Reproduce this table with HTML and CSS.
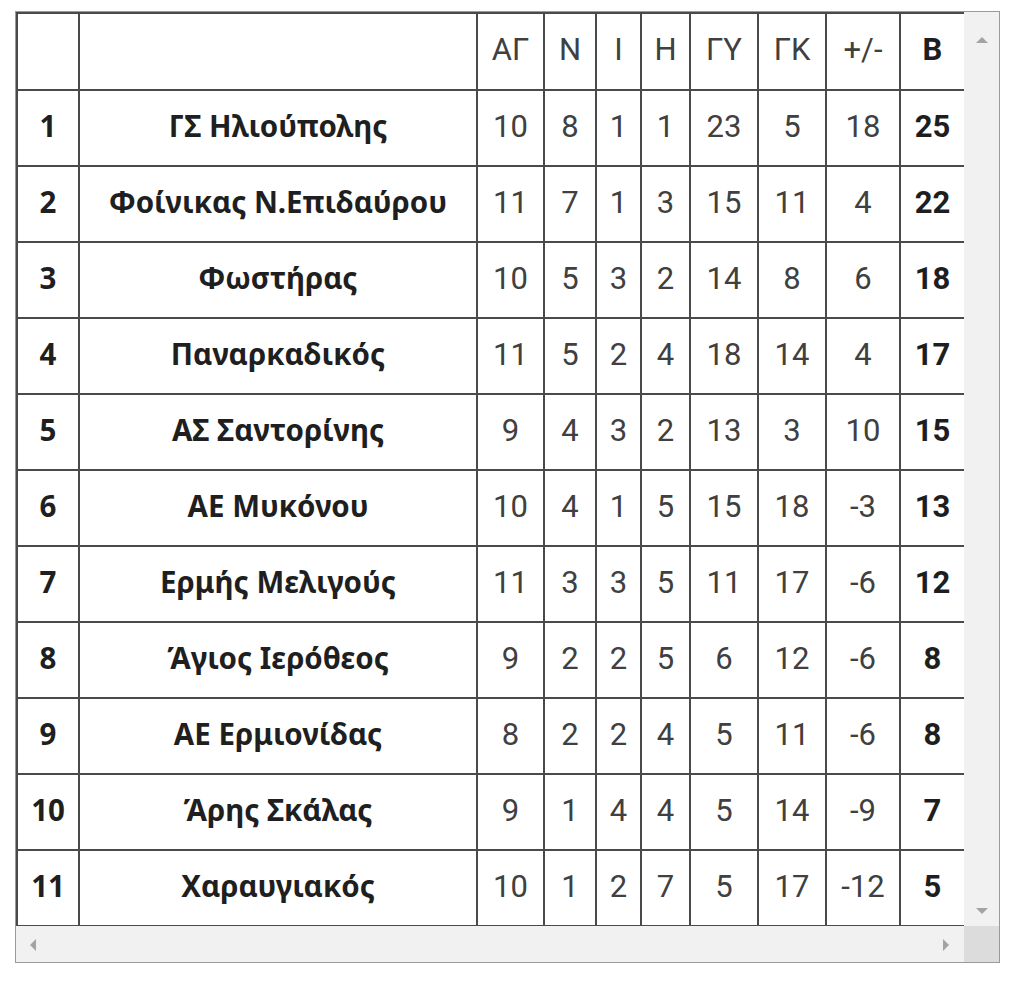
FILE: index.html
```html
<!DOCTYPE html>
<html lang="el">
<head>
<meta charset="utf-8">
<title>Βαθμολογία</title>
<link rel="stylesheet" href="styles.css">
</head>
<body>
<div class="frame">
  <div class="viewport">
    <table class="standings">
      <colgroup>
        <col class="c-pos"><col class="c-team"><col class="c-ag"><col class="c-n"><col class="c-i"><col class="c-h"><col class="c-gy"><col class="c-gk"><col class="c-diff"><col class="c-pts">
      </colgroup>
      <thead>
        <tr><th></th><th></th><th>ΑΓ</th><th>Ν</th><th>Ι</th><th>Η</th><th>ΓΥ</th><th>ΓΚ</th><th>+/-</th><th class="b">Β</th></tr>
      </thead>
      <tbody>
        <tr><td class="pos">1</td><td class="team">ΓΣ Ηλιούπολης</td><td>10</td><td>8</td><td>1</td><td>1</td><td>23</td><td>5</td><td>18</td><td class="b">25</td></tr>
        <tr><td class="pos">2</td><td class="team">Φοίνικας Ν.Επιδαύρου</td><td>11</td><td>7</td><td>1</td><td>3</td><td>15</td><td>11</td><td>4</td><td class="b">22</td></tr>
        <tr><td class="pos">3</td><td class="team">Φωστήρας</td><td>10</td><td>5</td><td>3</td><td>2</td><td>14</td><td>8</td><td>6</td><td class="b">18</td></tr>
        <tr><td class="pos">4</td><td class="team">Παναρκαδικός</td><td>11</td><td>5</td><td>2</td><td>4</td><td>18</td><td>14</td><td>4</td><td class="b">17</td></tr>
        <tr><td class="pos">5</td><td class="team">ΑΣ Σαντορίνης</td><td>9</td><td>4</td><td>3</td><td>2</td><td>13</td><td>3</td><td>10</td><td class="b">15</td></tr>
        <tr><td class="pos">6</td><td class="team">ΑΕ Μυκόνου</td><td>10</td><td>4</td><td>1</td><td>5</td><td>15</td><td>18</td><td>-3</td><td class="b">13</td></tr>
        <tr><td class="pos">7</td><td class="team">Ερμής Μελιγούς</td><td>11</td><td>3</td><td>3</td><td>5</td><td>11</td><td>17</td><td>-6</td><td class="b">12</td></tr>
        <tr><td class="pos">8</td><td class="team">Άγιος Ιερόθεος</td><td>9</td><td>2</td><td>2</td><td>5</td><td>6</td><td>12</td><td>-6</td><td class="b">8</td></tr>
        <tr><td class="pos">9</td><td class="team">ΑΕ Ερμιονίδας</td><td>8</td><td>2</td><td>2</td><td>4</td><td>5</td><td>11</td><td>-6</td><td class="b">8</td></tr>
        <tr><td class="pos">10</td><td class="team">Άρης Σκάλας</td><td>9</td><td>1</td><td>4</td><td>4</td><td>5</td><td>14</td><td>-9</td><td class="b">7</td></tr>
        <tr><td class="pos">11</td><td class="team">Χαραυγιακός</td><td>10</td><td>1</td><td>2</td><td>7</td><td>5</td><td>17</td><td>-12</td><td class="b">5</td></tr>
      </tbody>
    </table>
    <div class="vbar"><span class="arrow up"></span><span class="arrow down"></span></div>
    <div class="hbar"><span class="arrow left"></span><span class="arrow right"></span></div>
    <div class="corner"></div>
  </div>
</div>
</body>
</html>
```

FILE: styles.css
```css
html, body {
  margin: 0;
  padding: 0;
  background: #ffffff;
}
body {
  padding: 11px 0 0 15px;
  font-family: Roboto, "Noto Sans", sans-serif;
}
.frame {
  width: 983px;
  height: 950px;
  border: 1px solid #9a9a9a;
}
.viewport {
  display: grid;
  grid-template-columns: 948px 35px;
  grid-template-rows: 914px 36px;
  width: 983px;
  height: 950px;
}
.standings {
  border-collapse: collapse;
  table-layout: fixed;
  width: 948px;
  border: 2px solid #4a4a4a;
  align-self: start;
}
.c-pos { width: 62px; }
.c-team { width: 398px; }
.c-ag { width: 67px; }
.c-n { width: 52px; }
.c-i { width: 45px; }
.c-h { width: 49px; }
.c-gy { width: 68px; }
.c-gk { width: 68px; }
.c-diff { width: 74px; }
.c-pts { width: 65px; }
.standings th,
.standings td {
  border: 2px solid #4a4a4a;
  padding: 0 0 4px 0;
  text-align: center;
  vertical-align: middle;
  font-size: 31px;
  font-weight: 400;
  color: #404040;
  line-height: 1;
}
.standings th {
  height: 71px;
}
.standings td {
  height: 70px;
}
.standings .b {
  font-weight: 700;
  color: #1e1e1e;
}
.standings .pos,
.standings .team {
  font-family: "Noto Sans", Roboto, sans-serif;
  font-weight: 700;
  color: #1f1f1f;
  font-size: 29.5px;
}
.vbar {
  background: #f1f1f1;
  position: relative;
}
.hbar {
  background: #f1f1f1;
  position: relative;
}
.corner {
  background: #dcdcdc;
}
.arrow {
  position: absolute;
  width: 0;
  height: 0;
}
.arrow.up {
  top: 25px;
  left: 12px;
  border-left: 6px solid transparent;
  border-right: 6px solid transparent;
  border-bottom: 6px solid #a3a3a3;
}
.arrow.down {
  bottom: 12px;
  left: 12px;
  border-left: 6px solid transparent;
  border-right: 6px solid transparent;
  border-top: 6px solid #a3a3a3;
}
.arrow.left {
  left: 14px;
  top: 13px;
  border-top: 6px solid transparent;
  border-bottom: 6px solid transparent;
  border-right: 6px solid #a3a3a3;
}
.arrow.right {
  right: 15px;
  top: 13px;
  border-top: 6px solid transparent;
  border-bottom: 6px solid transparent;
  border-left: 6px solid #a3a3a3;
}
```
